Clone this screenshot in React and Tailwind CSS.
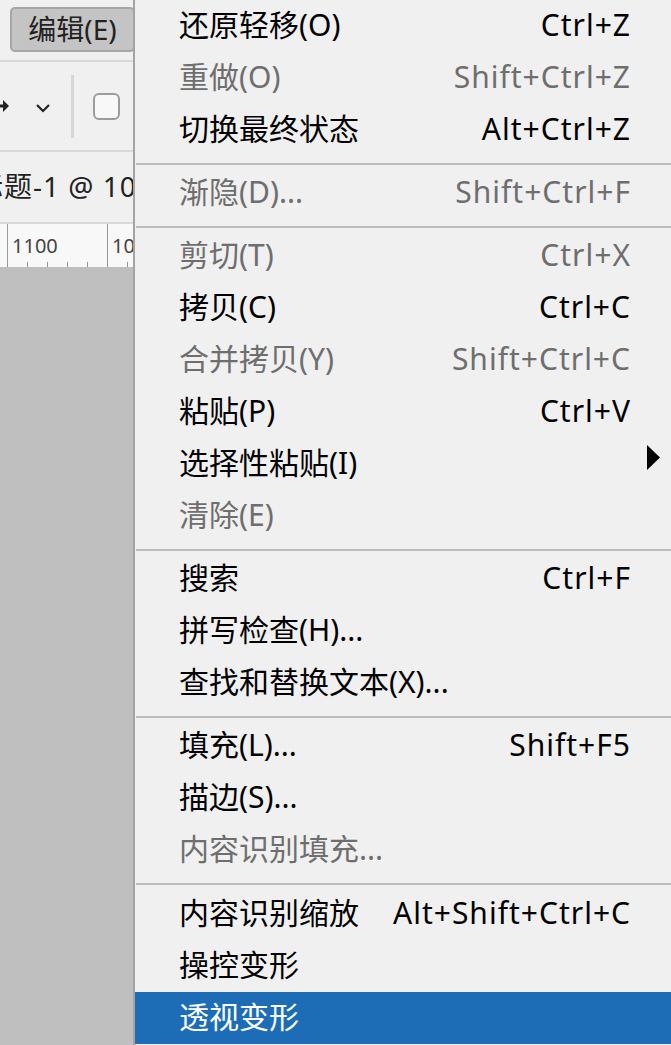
import React from 'react';

const FONT = { fontFamily: '"Noto Sans", "Noto Sans CJK SC", sans-serif' };

const sections = [
  [
    { label: '还原轻移(O)', key: 'Ctrl+Z' },
    { label: '重做(O)', key: 'Shift+Ctrl+Z', disabled: true },
    { label: '切换最终状态', key: 'Alt+Ctrl+Z' },
  ],
  [{ label: '渐隐(D)...', key: 'Shift+Ctrl+F', disabled: true }],
  [
    { label: '剪切(T)', key: 'Ctrl+X', disabled: true },
    { label: '拷贝(C)', key: 'Ctrl+C' },
    { label: '合并拷贝(Y)', key: 'Shift+Ctrl+C', disabled: true },
    { label: '粘贴(P)', key: 'Ctrl+V' },
    { label: '选择性粘贴(I)', sub: true },
    { label: '清除(E)', disabled: true },
  ],
  [
    { label: '搜索', key: 'Ctrl+F' },
    { label: '拼写检查(H)...' },
    { label: '查找和替换文本(X)...' },
  ],
  [
    { label: '填充(L)...', key: 'Shift+F5' },
    { label: '描边(S)...' },
    { label: '内容识别填充...', disabled: true },
  ],
  [
    { label: '内容识别缩放', key: 'Alt+Shift+Ctrl+C' },
    { label: '操控变形' },
    { label: '透视变形', active: true },
  ],
];

function MenuRow({ item }) {
  let color = 'text-black';
  if (item.disabled) color = 'text-[#6e6e6e]';
  if (item.active) color = 'text-white';
  return (
    <div
      className={`flex h-[52px] items-center pb-[3px] pl-[44px] pr-[40px] text-[30px] ${color} ${
        item.active ? 'bg-[#1d6db6]' : ''
      }`}
    >
      <span className="whitespace-nowrap">{item.label}</span>
      <span className="flex-1" />
      {item.key && <span className="whitespace-nowrap tracking-[1px]">{item.key}</span>}
      {item.sub && (
        <svg width="13" height="25" viewBox="0 0 13 25" className="mr-[-29px] mt-[-10px]">
          <path d="M0 0 L13 12.5 L0 25 Z" fill="#000" />
        </svg>
      )}
    </div>
  );
}

function Separator({ last }) {
  return (
    <div className={`pt-[7px] ${last ? 'pb-[3px]' : 'pb-[2px]'} pl-[1px]`}>
      <div className="h-[2px] bg-[#bcbcbc]" />
    </div>
  );
}

function LeftPanel() {
  return (
    <div className="flex w-[133px] shrink-0 flex-col overflow-hidden">
      <div className="h-[62px] border-b-2 border-[#d9d9d9] pl-[10px] pt-[7px]">
        <div className="flex h-[45px] w-[125px] items-center justify-center rounded-[5px] border-2 border-[#a6a6a6] bg-[#c4c4c4] pb-[2px] text-[28px] text-[#222]">
          编辑(E)
        </div>
      </div>
      <div className="flex h-[90px] items-center border-b-2 border-[#d9d9d9]">
        <svg width="10" height="14" viewBox="0 0 10 14" className="shrink-0">
          <path d="M0 7 L6 7" stroke="#222" strokeWidth="3" />
          <path d="M3 1 L9 7 L3 13 Z" fill="#222" />
        </svg>
        <svg width="16" height="10" viewBox="0 0 16 10" className="ml-[25px] mt-[3px] shrink-0">
          <path d="M2 2 L8 8 L14 2" fill="none" stroke="#222" strokeWidth="2.2" />
        </svg>
        <div className="ml-[20px] h-[63px] w-[3px] bg-[#d6d6d6]" />
        <div className="ml-[19px] h-[27px] w-[27px] rounded-[6px] border-2 border-[#9c9c9c] bg-[#f8f8f8]" />
      </div>
      <div className="flex h-[72px] items-center overflow-hidden border-b-2 border-[#d9d9d9] pb-[2px]">
        <span className="ml-[-54px] whitespace-nowrap text-[28px] tracking-[1px] text-[#222]">未标题-1 @ 100%</span>
      </div>
      <div className="relative h-[43px] overflow-hidden bg-[#f8f8f8]">
        <svg width="133" height="43" className="absolute left-0 top-0">
          <path d="M7.5 0 V43 M107.5 0 V43" stroke="#999" strokeWidth="1" />
          <path d="M27.5 38 V43 M47.5 38 V43 M67.5 38 V43 M87.5 38 V43 M127.5 38 V43" stroke="#999" strokeWidth="1" />
        </svg>
        <span className="absolute left-[12px] top-[10px] text-[20px] leading-[24px] text-[#444]">1100</span>
        <span className="absolute left-[112px] top-[10px] whitespace-nowrap text-[20px] leading-[24px] text-[#444]">1000</span>
      </div>
      <div className="flex-1 bg-[#bfbfbf]" />
    </div>
  );
}

export default function App() {
  return (
    <div className="flex h-[1045px] w-[671px] overflow-hidden bg-[#f0f0f0]" style={FONT}>
      <LeftPanel />
      <div className="flex flex-1 flex-col border-l-2 border-[#a3a3a3] bg-[#f0f0f0]">
        {sections.map((sec, i) => (
          <React.Fragment key={i}>
            {i > 0 && <Separator last={i === sections.length - 1} />}
            {sec.map((item) => (
              <MenuRow key={item.label} item={item} />
            ))}
          </React.Fragment>
        ))}
      </div>
    </div>
  );
}
